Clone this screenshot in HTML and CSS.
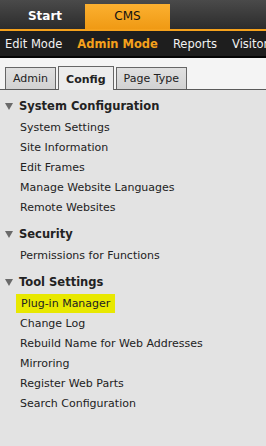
FILE: index.html
```html
<!DOCTYPE html>
<html lang="en">
<head>
    <meta charset="UTF-8">
    <title>CMS Config</title>
    <link rel="stylesheet" href="styles.css">
</head>
<body>
    <div class="topbar">
        <div class="top-tab">Start</div>
        <div class="top-tab active">CMS</div>
    </div>
    <div class="modebar">
        <span>Edit Mode</span>
        <span class="current">Admin Mode</span>
        <span>Reports</span>
        <span>Visitor</span>
    </div>
    <div class="tabstrip">
        <div class="tab">Admin</div>
        <div class="tab selected">Config</div>
        <div class="tab">Page Type</div>
    </div>
    <div class="panel">
        <div class="group">
            <div class="group-title"><span class="arrow"></span>System Configuration</div>
            <div class="item">System Settings</div>
            <div class="item">Site Information</div>
            <div class="item">Edit Frames</div>
            <div class="item">Manage Website Languages</div>
            <div class="item">Remote Websites</div>
        </div>
        <div class="group">
            <div class="group-title"><span class="arrow"></span>Security</div>
            <div class="item">Permissions for Functions</div>
        </div>
        <div class="group">
            <div class="group-title"><span class="arrow"></span>Tool Settings</div>
            <div class="item"><span class="highlight">Plug-in Manager</span></div>
            <div class="item">Change Log</div>
            <div class="item">Rebuild Name for Web Addresses</div>
            <div class="item">Mirroring</div>
            <div class="item">Register Web Parts</div>
            <div class="item">Search Configuration</div>
        </div>
    </div>
</body>
</html>
```

FILE: styles.css
```css
body {
    margin: 0;
    font-family: 'DejaVu Sans', Verdana, sans-serif;
    font-size: 11px;
    background-color: #e3e3e3;
    color: #222;
    overflow: hidden;
}
.topbar {
    height: 25px;
    padding-top: 4px;
    padding-left: 5px;
    display: flex;
    background: linear-gradient(#4a4a4a, #2c2c2c);
    border-bottom: 2px solid #f5a11c;
}
.top-tab {
    width: 80px;
    line-height: 25px;
    text-align: center;
    font-weight: bold;
    font-size: 12px;
    color: white;
}
.top-tab.active {
    width: 85px;
    background: linear-gradient(#fbb030, #f09a14);
    color: #111;
    font-weight: normal;
}
.modebar {
    height: 24px;
    background-color: #1e1e1e;
    border-bottom: 2px solid #050505;
    display: flex;
    align-items: center;
    gap: 15px;
    padding-left: 5px;
    padding-top: 1px;
    white-space: nowrap;
    overflow: hidden;
    font-size: 11.5px;
    color: #f2f2f2;
}
.modebar .current {
    color: #f5a11c;
    font-weight: bold;
}
.tabstrip {
    background-color: #f4f4f4;
    height: 31px;
    display: flex;
    align-items: flex-end;
    gap: 2px;
    padding-left: 5px;
    border-bottom: 1px solid #5a5a5a;
}
.tab {
    height: 21px;
    line-height: 21px;
    padding: 0 7px;
    border: 1px solid #666;
    border-bottom: none;
    background: linear-gradient(#e0e0e0, #d2d2d2);
    color: #222;
}
.tab.selected {
    height: 23px;
    line-height: 25px;
    background: #ececec;
    font-weight: bold;
    margin-bottom: -1px;
}
.panel {
    padding: 4px 0 0 5px;
}
.group {
    margin-bottom: 4px;
}
.group-title {
    font-weight: bold;
    font-size: 11.5px;
    line-height: 24px;
    display: flex;
    align-items: center;
}
.arrow {
    width: 0;
    height: 0;
    border-left: 4px solid transparent;
    border-right: 4px solid transparent;
    border-top: 7px solid #6a6a6a;
    margin-right: 6px;
}
.item {
    line-height: 20px;
    padding-left: 15px;
}
.highlight {
    background-color: #e8e800;
    padding: 3px 5px;
    margin-left: -4px;
}
```
